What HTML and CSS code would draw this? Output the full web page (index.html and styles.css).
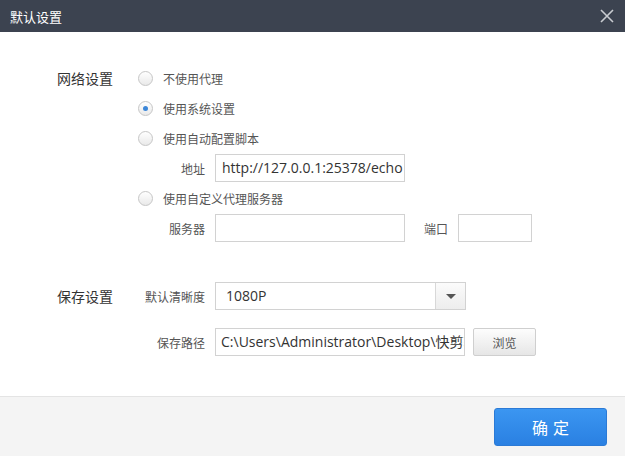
FILE: index.html
```html
<!DOCTYPE html>
<html lang="zh-CN">
<head>
<meta charset="utf-8">
<title>默认设置</title>
<link rel="stylesheet" href="styles.css">
</head>
<body>
<div class="dialog">
  <div class="titlebar">
    <span class="title">默认设置</span>
    <span class="close">
      <svg width="14" height="14" viewBox="0 0 14 14"><path d="M1 1L13 13M13 1L1 13" stroke="#c9ccd1" stroke-width="1.6" fill="none"/></svg>
    </span>
  </div>
  <div class="main">
    <div class="section">
      <div class="section-title">网络设置</div>
      <div class="section-body">
        <div class="row"><span class="radio"></span><span class="opt">不使用代理</span></div>
        <div class="row"><span class="radio checked"></span><span class="opt">使用系统设置</span></div>
        <div class="row"><span class="radio"></span><span class="opt">使用自动配置脚本</span></div>
        <div class="row field"><span class="label">地址</span><div class="input wide">http://127.0.0.1:25378/echo</div></div>
        <div class="row"><span class="radio"></span><span class="opt">使用自定义代理服务器</span></div>
        <div class="row field"><span class="label">服务器</span><div class="input wide"></div><span class="label2">端口</span><div class="input port"></div></div>
      </div>
    </div>
    <div class="section second">
      <div class="section-title t2">保存设置</div>
      <div class="section-body">
        <div class="field f2"><span class="label">默认清晰度</span><div class="select"><span class="sel-text">1080P</span><span class="sel-btn"><span class="caret"></span></span></div></div>
        <div class="field f2 gap"><span class="label">保存路径</span><div class="input path">C:\Users\Administrator\Desktop\快剪辑</div><span class="browse">浏览</span></div>
      </div>
    </div>
  </div>
  <div class="footer">
    <span class="ok">确定</span>
  </div>
</div>
</body>
</html>
```
FILE: styles.css
```css
html, body {
  margin: 0;
  padding: 0;
  background: #fff;
}
body {
  font-family: "Noto Sans CJK SC", "Open Sans", sans-serif;
}
.dialog {
  width: 625px;
  height: 456px;
  display: flex;
  flex-direction: column;
  overflow: hidden;
}
.titlebar {
  height: 32px;
  background: #3c4350;
  display: flex;
  align-items: center;
  justify-content: space-between;
  padding: 0 11px 0 10px;
}
.title {
  color: #fff;
  font-size: 13px;
  line-height: 1;
}
.close {
  display: flex;
  width: 14px;
  height: 14px;
}
.main {
  flex: 1;
  padding-top: 31px;
}
.section {
  display: flex;
  padding-left: 57px;
}
.section-title {
  width: 80px;
  font-size: 14px;
  color: #333;
  line-height: 30px;
}
.section.second {
  margin-top: 39px;
}
.t2 {
  line-height: 28px;
}
.section-body {
  display: flex;
  flex-direction: column;
}
.row {
  height: 30px;
  display: flex;
  align-items: center;
}
.radio {
  width: 13px;
  height: 13px;
  border: 1px solid #c6c6c6;
  border-radius: 50%;
  background: linear-gradient(#ffffff, #e9e9e9);
  margin-left: 1px;
  margin-right: 10px;
  display: flex;
  align-items: center;
  justify-content: center;
  box-sizing: content-box;
}
.radio.checked::after {
  content: "";
  width: 5px;
  height: 5px;
  border-radius: 50%;
  background: #3b86d8;
}
.opt {
  font-size: 12px;
  color: #555;
}
.field {
  display: flex;
  align-items: center;
}
.label {
  width: 68px;
  text-align: right;
  margin-right: 10px;
  font-size: 12px;
  color: #555;
}
.label2 {
  font-size: 12px;
  color: #555;
  margin: 0 10px 0 19px;
}
.input {
  height: 26px;
  border: 1px solid #d2d2d2;
  background: #fff;
  font-family: "Open Sans", "Noto Sans CJK SC", sans-serif;
  font-size: 14px;
  color: #333;
  line-height: 26px;
  padding-left: 6px;
  white-space: nowrap;
  overflow: hidden;
  text-overflow: clip;
  box-sizing: content-box;
}
.input.wide {
  width: 182px;
}
.input.port {
  width: 66px;
  padding-left: 6px;
}
.input.path {
  width: 243px;
  padding-left: 5px;
}
.f2 {
  height: 28px;
}
.f2.gap {
  margin-top: 18px;
}
.select {
  width: 249px;
  height: 26px;
  border: 1px solid #d2d2d2;
  display: flex;
  box-sizing: content-box;
}
.sel-text {
  flex: 1;
  font-family: "Open Sans", sans-serif;
  font-size: 14px;
  color: #333;
  line-height: 26px;
  padding-left: 10px;
}
.sel-btn {
  width: 29px;
  border-left: 1px solid #d8d8d8;
  background: linear-gradient(#fbfbfb, #ededed);
  display: flex;
  align-items: center;
  justify-content: center;
}
.caret {
  width: 0;
  height: 0;
  border-left: 5px solid transparent;
  border-right: 5px solid transparent;
  border-top: 5px solid #555;
}
.browse {
  margin-left: 8px;
  width: 61px;
  height: 26px;
  border: 1px solid #cfcfcf;
  border-radius: 2px;
  background: linear-gradient(#fdfdfd, #e6e6e6);
  font-size: 12px;
  color: #555;
  display: flex;
  align-items: center;
  justify-content: center;
  box-sizing: content-box;
}
.footer {
  height: 60px;
  background: #f4f4f4;
  border-top: 1px solid #e4e4e4;
  display: flex;
  justify-content: flex-end;
  align-items: flex-start;
  padding: 11px 18px 0 0;
  box-sizing: border-box;
}
.ok {
  width: 111px;
  height: 36px;
  border: 1px solid #2b7ad6;
  border-radius: 3px;
  background: linear-gradient(#3b96f1, #2a80e2);
  color: #fff;
  font-size: 16px;
  letter-spacing: 5px;
  text-indent: 5px;
  display: flex;
  align-items: center;
  justify-content: center;
  box-sizing: content-box;
}
```
